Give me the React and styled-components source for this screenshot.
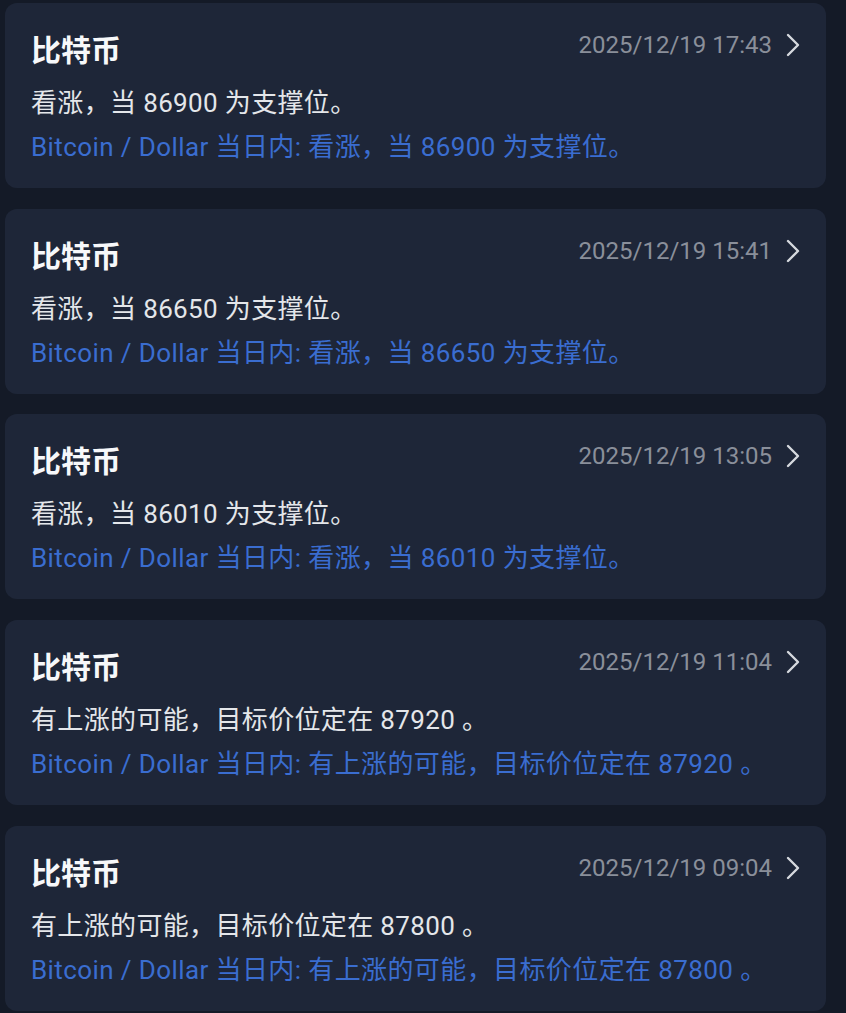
import React from "react";
import styled, { createGlobalStyle } from "styled-components";

const alerts = [
  { time: "2025/12/19 17:43", text: "看涨，当 86900 为支撑位。" },
  { time: "2025/12/19 15:41", text: "看涨，当 86650 为支撑位。" },
  { time: "2025/12/19 13:05", text: "看涨，当 86010 为支撑位。" },
  { time: "2025/12/19 11:04", text: "有上涨的可能，目标价位定在 87920 。" },
  { time: "2025/12/19 09:04", text: "有上涨的可能，目标价位定在 87800 。" },
];

export default function App() {
  return (
    <>
      <GlobalStyle />
      <List>
        {alerts.map((a, i) => (
          <Card key={i}>
            <Head>
              <Title>比特币</Title>
              <Meta>
                <Time>{a.time}</Time>
                <Chevron viewBox="0 0 18 28">
                  <path d="M4 4 L14 14 L4 24" />
                </Chevron>
              </Meta>
            </Head>
            <Body>{a.text}</Body>
            <Source>Bitcoin / Dollar 当日内: {a.text}</Source>
          </Card>
        ))}
      </List>
    </>
  );
}

const GlobalStyle = createGlobalStyle`
  html, body {
    margin: 0;
    background: #141a27;
  }
  body {
    font-family: Roboto, "Noto Sans CJK SC", sans-serif;
  }
`;

const List = styled.div`
  display: flex;
  flex-direction: column;
  gap: 20.7px;
  padding: 3px 20px 0 5px;
  width: 821px;
`;

const Card = styled.div`
  height: 185px;
  box-sizing: border-box;
  background: #1e2638;
  border-radius: 12px;
  padding: 27px 24px 0 26px;
`;

const Head = styled.div`
  display: flex;
  justify-content: space-between;
  align-items: center;
  height: 36px;
  margin-bottom: 19px;
`;

const Title = styled.div`
  font-size: 30px;
  font-weight: 700;
  color: #f7f8fa;
  line-height: 36px;
  font-family: "Noto Sans CJK SC", sans-serif;
`;

const Meta = styled.div`
  display: flex;
  align-items: center;
  gap: 12px;
  margin-top: -6px;
`;

const Time = styled.span`
  font-size: 24px;
  color: #8a8f9a;
`;

const Chevron = styled.svg`
  width: 18px;
  height: 28px;
  fill: none;
  stroke: #d6d9de;
  stroke-width: 2.4;
  stroke-linecap: round;
  stroke-linejoin: round;
`;

const Body = styled.div`
  font-size: 26px;
  line-height: 36px;
  letter-spacing: 0.35px;
  color: #e4e6ea;
`;

const Source = styled.div`
  margin-top: 8px;
  font-size: 26px;
  line-height: 36px;
  letter-spacing: 0.4px;
  color: #3a6dd0;
`;
